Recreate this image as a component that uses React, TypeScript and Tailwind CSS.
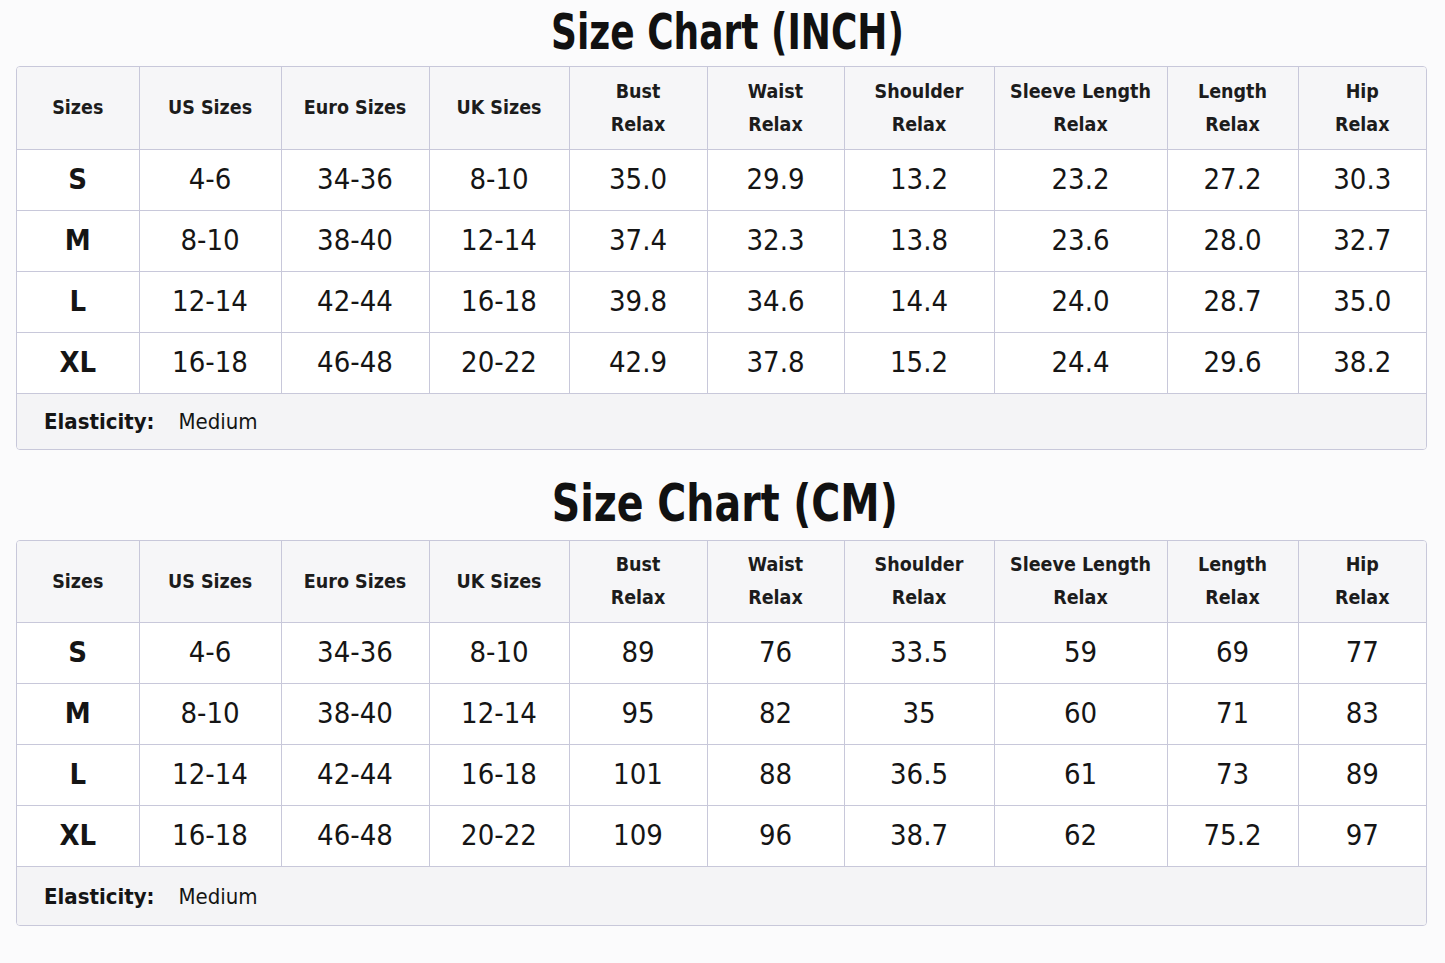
import React from "react";

const cols = [122, 142, 148, 140, 138, 137, 150, 173, 131, 128];
const headers: string[][] = [
  ["Sizes"],
  ["US Sizes"],
  ["Euro Sizes"],
  ["UK Sizes"],
  ["Bust", "Relax"],
  ["Waist", "Relax"],
  ["Shoulder", "Relax"],
  ["Sleeve Length", "Relax"],
  ["Length", "Relax"],
  ["Hip", "Relax"],
];

const inchRows = [
  ["S", "4-6", "34-36", "8-10", "35.0", "29.9", "13.2", "23.2", "27.2", "30.3"],
  ["M", "8-10", "38-40", "12-14", "37.4", "32.3", "13.8", "23.6", "28.0", "32.7"],
  ["L", "12-14", "42-44", "16-18", "39.8", "34.6", "14.4", "24.0", "28.7", "35.0"],
  ["XL", "16-18", "46-48", "20-22", "42.9", "37.8", "15.2", "24.4", "29.6", "38.2"],
];

const cmRows = [
  ["S", "4-6", "34-36", "8-10", "89", "76", "33.5", "59", "69", "77"],
  ["M", "8-10", "38-40", "12-14", "95", "82", "35", "60", "71", "83"],
  ["L", "12-14", "42-44", "16-18", "101", "88", "36.5", "61", "73", "89"],
  ["XL", "16-18", "46-48", "20-22", "109", "96", "38.7", "62", "75.2", "97"],
];

function Chart({ title, rows, second }: { title: string; rows: string[][]; second?: boolean }) {
  return (
    <div className="flex flex-col">
      <div className={`flex justify-center ${second ? "mb-[7px] pr-[12px]" : "mb-[4px] pr-[6px]"}`}>
        <h1
          className={`font-bold text-[#111] ${
            second ? "text-[52px] leading-[60px] scale-x-[0.845]" : "text-[50px] leading-[60px] scale-x-[0.8]"
          }`}
        >
          {title}
        </h1>
      </div>
      <div className="w-[1411px] border border-[#c8c8da] rounded-[4px] overflow-hidden">
        <table className="w-full border-collapse table-fixed">
          <colgroup>
            {cols.map((w, i) => (
              <col key={i} style={{ width: w }} />
            ))}
          </colgroup>
          <thead>
            <tr className={`${second ? "h-[81px]" : "h-[82px]"} bg-[#f6f6f8]`}>
              {headers.map((h, i) => (
                <th
                  key={i}
                  className={`text-[19.5px] leading-[33px] font-bold text-[#1c1c1c] text-center align-middle ${
                    i > 0 ? "border-l border-[#c8c8da]" : ""
                  }`}
                >
                  {h.map((line, j) => (
                    <div key={j}>{line}</div>
                  ))}
                </th>
              ))}
            </tr>
          </thead>
          <tbody>
            {rows.map((r, ri) => (
              <tr key={ri} className="h-[61px] bg-white border-t border-[#c8c8da]">
                {r.map((c, ci) => (
                  <td
                    key={ci}
                    className={`text-center align-middle text-[29px] text-[#151515] ${
                      ci === 0 ? "font-bold" : "font-normal"
                    } ${ci > 0 ? "border-l border-[#c8c8da]" : ""}`}
                  >
                    {c}
                  </td>
                ))}
              </tr>
            ))}
          </tbody>
        </table>
        <div
          className={`${second ? "h-[59px]" : "h-[56px]"} bg-[#f4f4f6] border-t border-[#c8c8da] flex items-center pl-[27px] text-[22px] text-[#151515]`}
        >
          <span className="font-bold">Elasticity:</span>
          <span className="ml-[24px]">Medium</span>
        </div>
      </div>
    </div>
  );
}

export default function App() {
  return (
    <div
      className="w-[1445px] h-[963px] bg-[#fbfbfc] flex flex-col pl-[16px] pt-[2px] gap-[23px]"
      style={{ fontFamily: "'DejaVu Sans Condensed', 'DejaVu Sans', sans-serif" }}
    >
      <Chart title="Size Chart (INCH)" rows={inchRows} />
      <Chart title="Size Chart (CM)" rows={cmRows} second />
    </div>
  );
}
